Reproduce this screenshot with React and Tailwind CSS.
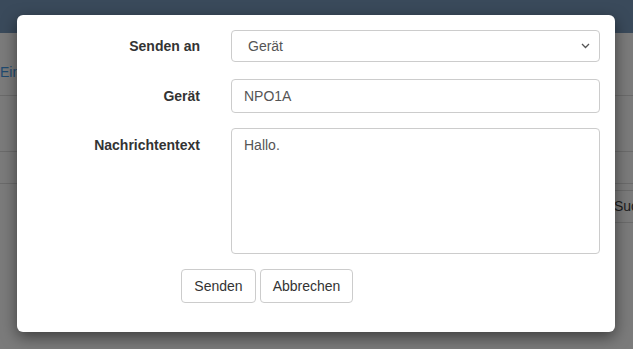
export default function App() {
  const font = { fontFamily: '"Liberation Sans", Arial, sans-serif' };
  return (
    <div className="relative h-[349px] w-[633px] overflow-hidden bg-[#7b7b7b]" style={font}>
      {/* background page */}
      <div className="h-[33px] bg-[#3a4a5b]" />
      <div className="h-[63px] border-b border-[#6b6b6b] flex items-center">
        <span className="text-[14px] text-[#1f4a70] pt-[17px]">Einstellungen</span>
      </div>
      <div className="h-[56px] border-b border-[#6b6b6b]" />
      <div className="h-[32px] border-b border-[#6b6b6b]" />
      <div className="flex justify-end">
        <div className="w-[22px] mt-[6px] h-[33px] border-t border-b border-l border-[#6b6b6b] pl-[2px] flex items-center text-[14px] text-[#1c1c1c] overflow-hidden whitespace-nowrap">
          Suchen
        </div>
      </div>

      {/* modal */}
      <div className="absolute left-[17px] top-[15px] w-[598px] h-[317px] bg-white rounded-[6px] shadow-[0_5px_15px_rgba(0,0,0,0.5)] pt-[15px]">
        <div className="flex items-center h-[32px]">
          <div className="w-[183px] text-right text-[14px] font-bold text-[#333]">Senden an</div>
          <div className="ml-[31px] w-[369px] h-[32px] border border-[#ccc] rounded-[4px] flex items-center justify-between pl-[16px] pr-[9px] text-[14px] text-[#555]">
            <span>Gerät</span>
            <svg width="9" height="6" viewBox="0 0 9 6" fill="none">
              <path d="M1 1l3.5 3.5L8 1" stroke="#555" strokeWidth="1.3" />
            </svg>
          </div>
        </div>
        <div className="flex items-center h-[34px] mt-[17px]">
          <div className="w-[183px] text-right text-[14px] font-bold text-[#333]">Gerät</div>
          <div className="ml-[31px] w-[369px] h-[34px] border border-[#ccc] rounded-[4px] flex items-center pl-[12px] text-[14px] text-[#555]">
            NPO1A
          </div>
        </div>
        <div className="flex items-start mt-[15px]">
          <div className="w-[183px] text-right text-[14px] font-bold text-[#333] pt-[7px]">Nachrichtentext</div>
          <div className="ml-[31px] w-[369px] h-[126px] border border-[#ccc] rounded-[4px] pl-[12px] pt-[6px] text-[14px] text-[#555]">
            Hallo.
          </div>
        </div>
        <div className="flex gap-[4px] mt-[15px] pl-[164px]">
          <div className="h-[34px] px-[12px] w-[75px] flex items-center justify-center border border-[#ccc] rounded-[4px] text-[14px] text-[#333]">Senden</div>
          <div className="h-[34px] w-[93px] flex items-center justify-center border border-[#ccc] rounded-[4px] text-[14px] text-[#333]">Abbrechen</div>
        </div>
      </div>
    </div>
  );
}
